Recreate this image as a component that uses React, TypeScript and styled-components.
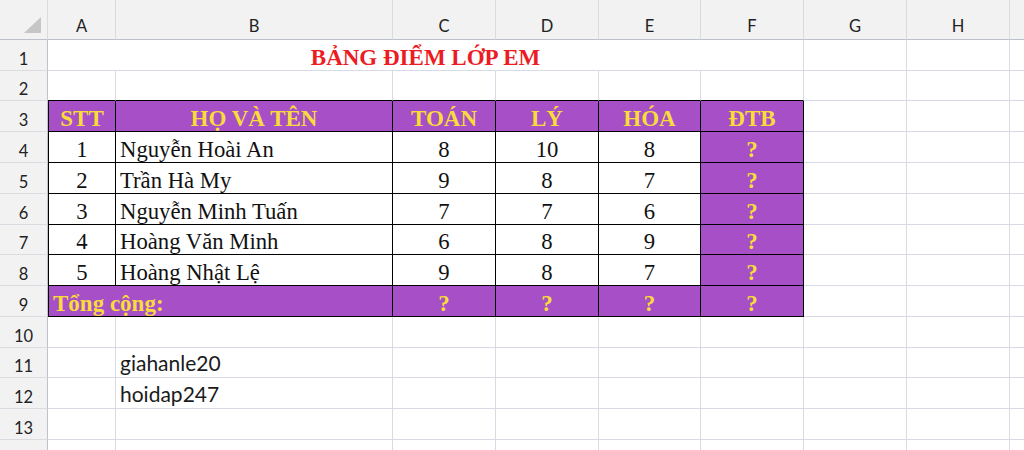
import React from 'react';
import styled, { createGlobalStyle, css } from 'styled-components';

const PURPLE = '#a64fc6';
const YELLOW = '#f8dc3a';
const GRID = '#d8dbe5';
const HEAD_BG = '#f2f2f3';
const HEAD_SEP = '#d9dbe0';
const HEAD_EDGE = '#bcc1ca';

const GlobalStyle = createGlobalStyle`
  html, body { margin: 0; padding: 0; background: #fff; }
  body { width: 1024px; height: 450px; overflow: hidden; }
`;

const Sheet = styled.div`
  display: grid;
  grid-template-columns: 48px 68px 277px 103px 103px 102px 103px 103px 103px 103px;
  grid-template-rows: 40px 31px 30px 31px 31px 31px 31px 30px 31px 31px 31px 30px 31px 31px 31px;
  width: 1024px;
  height: 450px;
  overflow: hidden;
  background: #fff;
`;

const Corner = styled.div`
  box-sizing: border-box;
  background: ${HEAD_BG};
  border-right: 1px solid ${HEAD_SEP};
  border-bottom: 1px solid ${HEAD_EDGE};
  display: flex;
  align-items: flex-end;
  justify-content: flex-end;
  padding: 0 6px 6px 0;
`;

const HeaderLabel = styled.div`
  box-sizing: border-box;
  background: ${HEAD_BG};
  display: flex;
  align-items: flex-end;
  justify-content: center;
  font-family: Lato, 'Open Sans', sans-serif;
  font-size: 16.5px;
  line-height: 1;
  color: #222;
  overflow: hidden;
  white-space: nowrap;
`;

const ColHeader = styled(HeaderLabel)`
  border-right: 1px solid ${HEAD_SEP};
  border-bottom: 1px solid ${HEAD_EDGE};
  padding-bottom: 5px;
`;

const RowHeader = styled(HeaderLabel)`
  border-right: 1px solid ${HEAD_EDGE};
  border-bottom: 1px solid ${HEAD_SEP};
  padding-bottom: 3px;
`;

type Kind = 'plain' | 'body' | 'purple';

const Cell = styled.div<{
  $kind?: Kind;
  $span?: number;
  $align?: 'left' | 'center';
  $edgeLeft?: boolean;
  $tableTop?: boolean;
}>`
  grid-column: span ${(p) => p.$span ?? 1};
  box-sizing: border-box;
  display: flex;
  align-items: flex-end;
  justify-content: ${(p) => (p.$align === 'left' ? 'flex-start' : 'center')};
  padding: 0 4px 0 4px;
  overflow: hidden;
  white-space: nowrap;
  background: ${(p) => (p.$kind === 'purple' ? PURPLE : '#fff')};
  border-right: 1px solid ${(p) => (p.$kind === 'body' || p.$kind === 'purple' ? '#000' : GRID)};
  border-bottom: 1px solid
    ${(p) => (p.$kind === 'body' || p.$kind === 'purple' || p.$tableTop ? '#000' : GRID)};
  ${(p) =>
    p.$edgeLeft &&
    css`
      border-left: 1px solid #000;
    `}
`;

const Title = styled.span`
  font-family: 'Liberation Serif', 'Times New Roman', serif;
  font-weight: 700;
  font-size: 23px;
  line-height: 1;
  color: #ec1c24;
  padding-bottom: 1px;
`;

const Heading = styled.span`
  font-family: 'Liberation Serif', 'Times New Roman', serif;
  font-weight: 700;
  font-size: 23px;
  line-height: 1;
  color: ${YELLOW};
  padding-bottom: 1px;
`;

const Value = styled.span`
  font-family: 'Liberation Serif', 'Times New Roman', serif;
  font-size: 22.7px;
  line-height: 1;
  color: #111;
  padding-bottom: 0px;
`;

const Note = styled.span`
  font-family: Lato, 'Open Sans', sans-serif;
  font-size: 21px;
  line-height: 1;
  color: #1a1a1a;
  padding-bottom: 4px;
`;

const COLS = ['A', 'B', 'C', 'D', 'E', 'F', 'G', 'H', 'I'];
const HEADINGS = ['STT', 'HỌ VÀ TÊN', 'TOÁN', 'LÝ', 'HÓA', 'ĐTB'];
const STUDENTS: [string, string, string, string, string][] = [
  ['1', 'Nguyễn Hoài An', '8', '10', '8'],
  ['2', 'Trần Hà My', '9', '8', '7'],
  ['3', 'Nguyễn Minh Tuấn', '7', '7', '6'],
  ['4', 'Hoàng Văn Minh', '6', '8', '9'],
  ['5', 'Hoàng Nhật Lệ', '9', '8', '7'],
];
const NOTES: Record<number, string> = { 11: 'giahanle20', 12: 'hoidap247' };
const VISIBLE_COLS = 8;
const VISIBLE_ROWS = 13;

function blanks(row: number, from: number) {
  return COLS.slice(from).map((c) => <Cell key={`${row}-${c}`} $kind="plain" />);
}

function renderRow(r: number) {
  const cells: React.ReactNode[] = [
    <RowHeader key={`h${r}`}>{r <= VISIBLE_ROWS ? r : ''}</RowHeader>,
  ];
  if (r === 1) {
    cells.push(
      <Cell key="title" $kind="plain" $span={6}>
        <Title>BẢNG ĐIỂM LỚP EM</Title>
      </Cell>,
      ...blanks(r, 6)
    );
  } else if (r === 2) {
    cells.push(
      ...COLS.slice(0, 6).map((c) => <Cell key={`2-${c}`} $kind="plain" $tableTop />),
      ...blanks(r, 6)
    );
  } else if (r === 3) {
    cells.push(
      ...HEADINGS.map((h, i) => (
        <Cell key={`3-${i}`} $kind="purple" $edgeLeft={i === 0}>
          <Heading>{h}</Heading>
        </Cell>
      )),
      ...blanks(r, 6)
    );
  } else if (r >= 4 && r <= 8) {
    const [stt, name, a, b, c] = STUDENTS[r - 4];
    cells.push(
      <Cell key={`${r}-A`} $kind="body" $edgeLeft>
        <Value>{stt}</Value>
      </Cell>,
      <Cell key={`${r}-B`} $kind="body" $align="left">
        <Value>{name}</Value>
      </Cell>,
      ...[a, b, c].map((v, i) => (
        <Cell key={`${r}-${i}`} $kind="body">
          <Value>{v}</Value>
        </Cell>
      )),
      <Cell key={`${r}-F`} $kind="purple">
        <Heading>?</Heading>
      </Cell>,
      ...blanks(r, 6)
    );
  } else if (r === 9) {
    cells.push(
      <Cell key="total" $kind="purple" $span={2} $align="left" $edgeLeft>
        <Heading>Tổng cộng:</Heading>
      </Cell>,
      ...[0, 1, 2, 3].map((i) => (
        <Cell key={`9-${i}`} $kind="purple">
          <Heading>?</Heading>
        </Cell>
      )),
      ...blanks(r, 6)
    );
  } else if (NOTES[r]) {
    cells.push(
      <Cell key={`${r}-A`} $kind="plain" />,
      <Cell key={`${r}-B`} $kind="plain" $align="left">
        <Note>{NOTES[r]}</Note>
      </Cell>,
      ...blanks(r, 2)
    );
  } else {
    cells.push(...blanks(r, 0));
  }
  return cells;
}

export default function App() {
  const rows = Array.from({ length: 14 }, (_, i) => i + 1);
  return (
    <>
      <GlobalStyle />
      <Sheet>
        <Corner>
          <svg width="17" height="16" viewBox="0 0 17 16">
            <polygon points="17,0 17,16 0,16" fill="#c6c6c6" />
          </svg>
        </Corner>
        {COLS.map((c, i) => (
          <ColHeader key={c}>{i < VISIBLE_COLS ? c : ''}</ColHeader>
        ))}
        {rows.map((r) => renderRow(r))}
      </Sheet>
    </>
  );
}
